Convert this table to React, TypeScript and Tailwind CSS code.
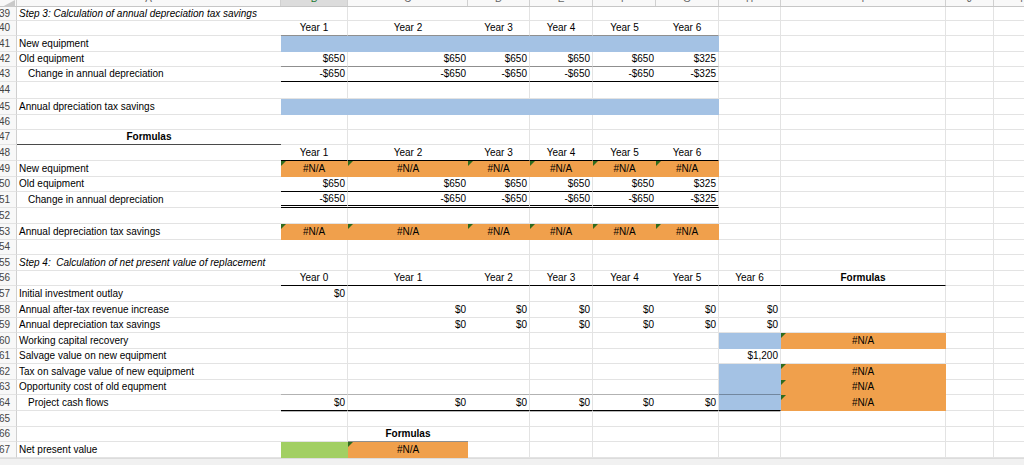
import React from "react";

type Cell = {
  t?: string;
  al?: "l" | "r" | "c";
  fill?: "blue" | "orange" | "green";
  b?: "grey" | "dark" | "black" | "soft" | "total" | "dbl";
  tri?: boolean;
  bold?: boolean;
  it?: boolean;
  ind?: boolean;
};

type Row = { n: number; h: number; c: Record<number, Cell> };

const COLS =
  "grid grid-cols-[17px_264px_67px_120px_62px_63px_63px_63px_62px_165px_48px_60px]";
const LETTERS = ["A", "B", "C", "D", "E", "F", "G", "H", "I", "J", "K"];
// body shows vertical gridlines only on some column edges
const VLINE = [false, true, false, true, true, false, true, true, true, true, true];

const HEIGHT: Record<number, string> = {
  14: "h-[14px]",
  15: "h-[15px]",
  16: "h-[16px]",
  17: "h-[17px]",
};

const FILL = {
  blue: "bg-[#a4c2e4]",
  orange: "bg-[#f0a04c]",
  green: "bg-[#a2cf63]",
};

const BORDER = {
  grey: "border-b border-b-[#8f8f8f]",
  dark: "border-b border-b-[#4a4a4a]",
  black: "border-b border-b-black",
  soft: "border-b border-b-black/30",
  total: "border-b border-b-black shadow-[0_1px_0_#b8b8b8]",
  dbl: "border-b-[3px] border-b-black [border-bottom-style:double]",
};

const span = (from: number, to: number, cell: Cell) => {
  const out: Record<number, Cell> = {};
  for (let i = from; i <= to; i++) out[i] = { ...cell };
  return out;
};

const list = (from: number, vals: string[], extra: Cell = {}) => {
  const out: Record<number, Cell> = {};
  vals.forEach((v, i) => (out[from + i] = { t: v, al: "r", ...extra }));
  return out;
};

const years = (from: number, start: number, count: number, b: Cell["b"]) => {
  const out: Record<number, Cell> = {};
  for (let i = 0; i < count; i++) out[from + i] = { t: `Year ${start + i}`, al: "c", b };
  return out;
};

const na = { t: "#N/A", al: "c" as const, fill: "orange" as const, tri: true };

const rows: Row[] = [
  { n: 39, h: 14, c: { 0: { t: "Step 3: Calculation of annual depreciation tax savings", it: true } } },
  { n: 40, h: 15, c: years(1, 1, 6, "grey") },
  { n: 41, h: 16, c: { 0: { t: "New equipment" }, ...span(1, 6, { fill: "blue" }) } },
  {
    n: 42,
    h: 15,
    c: { 0: { t: "Old equipment" }, ...list(1, ["$650", "$650", "$650", "$650", "$650", "$325"], { b: "grey" }) },
  },
  {
    n: 43,
    h: 15,
    c: {
      0: { t: "Change in annual depreciation", ind: true },
      ...list(1, ["-$650", "-$650", "-$650", "-$650", "-$650", "-$325"], { b: "black" }),
    },
  },
  { n: 44, h: 17, c: {} },
  { n: 45, h: 16, c: { 0: { t: "Annual dpreciation tax savings" }, ...span(1, 6, { fill: "blue" }) } },
  { n: 46, h: 15, c: {} },
  { n: 47, h: 15, c: { 0: { t: "Formulas", al: "c", bold: true, b: "dark" } } },
  { n: 48, h: 16, c: years(1, 1, 6, "black") },
  { n: 49, h: 16, c: { 0: { t: "New equipment" }, ...span(1, 6, na) } },
  {
    n: 50,
    h: 15,
    c: { 0: { t: "Old equipment" }, ...list(1, ["$650", "$650", "$650", "$650", "$650", "$325"], { b: "black" }) },
  },
  {
    n: 51,
    h: 16,
    c: {
      0: { t: "Change in annual depreciation", ind: true },
      ...list(1, ["-$650", "-$650", "-$650", "-$650", "-$650", "-$325"], { b: "dbl" }),
    },
  },
  { n: 52, h: 16, c: {} },
  { n: 53, h: 16, c: { 0: { t: "Annual depreciation tax savings" }, ...span(1, 6, na) } },
  { n: 54, h: 15, c: {} },
  { n: 55, h: 16, c: { 0: { t: "Step 4:  Calculation of net present value of replacement", it: true } } },
  { n: 56, h: 15, c: { ...years(1, 0, 7, "black"), 8: { t: "Formulas", al: "c", bold: true, b: "black" } } },
  { n: 57, h: 16, c: { 0: { t: "Initial investment outlay" }, 1: { t: "$0", al: "r" } } },
  {
    n: 58,
    h: 16,
    c: { 0: { t: "Annual after-tax revenue increase" }, ...list(2, ["$0", "$0", "$0", "$0", "$0", "$0"]) },
  },
  {
    n: 59,
    h: 15,
    c: { 0: { t: "Annual depreciation tax savings" }, ...list(2, ["$0", "$0", "$0", "$0", "$0", "$0"]) },
  },
  { n: 60, h: 16, c: { 0: { t: "Working capital recovery" }, 7: { fill: "blue" }, 8: na } },
  { n: 61, h: 15, c: { 0: { t: "Salvage value on new equipment" }, 7: { t: "$1,200", al: "r" } } },
  { n: 62, h: 16, c: { 0: { t: "Tax on salvage value of new equipment" }, 7: { fill: "blue" }, 8: na } },
  {
    n: 63,
    h: 15,
    c: {
      0: { t: "Opportunity cost of old equpment" },
      ...span(1, 6, { b: "soft" }),
      7: { fill: "blue", b: "soft" },
      8: na,
    },
  },
  {
    n: 64,
    h: 16,
    c: {
      0: { t: "Project cash flows", ind: true },
      ...list(1, ["$0", "$0", "$0", "$0", "$0", "$0"], { b: "total" }),
      7: { fill: "blue", b: "total" },
      8: na,
    },
  },
  { n: 65, h: 16, c: {} },
  { n: 66, h: 15, c: { 2: { t: "Formulas", al: "c", bold: true, b: "grey" } } },
  { n: 67, h: 16, c: { 0: { t: "Net present value" }, 1: { fill: "green" }, 2: na } },
];

function BodyCell({ cell, col }: { cell?: Cell; col: number }) {
  const c = cell ?? {};
  const align = c.al === "r" ? "justify-end" : c.al === "c" ? "justify-center" : "justify-start";
  const bottom = c.b ? BORDER[c.b] : c.fill ? "border-b border-b-transparent" : "border-b border-b-[#e3e3e3]";
  const right = VLINE[col]
    ? c.fill
      ? "border-r border-r-transparent"
      : "border-r border-r-[#e3e3e3]"
    : "";
  return (
    <div
      className={[
        "relative flex items-center overflow-hidden whitespace-pre leading-[12px]",
        c.ind ? "pl-[11px] pr-[2px]" : "px-[2px]",
        align,
        bottom,
        right,
        c.fill ? FILL[c.fill] : "",
        c.bold ? "font-bold" : "",
        c.it ? "italic" : "",
      ].join(" ")}
    >
      {c.tri && (
        <span className="absolute left-0 top-0 h-0 w-0 border-t-[5px] border-r-[5px] border-t-[#2f6b1e] border-r-transparent" />
      )}
      {c.t}
    </div>
  );
}

export default function App() {
  return (
    <div className="h-[465px] w-[1024px] overflow-hidden bg-white font-['Liberation_Sans',Arial,sans-serif] text-[10px] text-black">
      <div className={`${COLS} h-[7px] border-b border-b-[#c6c6c6] bg-[#f8f8f8]`}>
        <div className="relative border-r border-r-[#d0d0d0]">
          <svg className="absolute left-0 top-0" width="16" height="7" viewBox="0 0 16 7">
            <polygon points="2,7 15,7 15,0" fill="#c9c9c9" />
          </svg>
        </div>
        {LETTERS.map((l, i) => (
          <div
            key={l}
            className={`overflow-hidden border-r border-r-[#d0d0d0] text-center ${
              i === 1 ? "bg-[#dcdcdc] text-[#1e7a34]" : "text-[#666]"
            }`}
          >
            <span className="-mt-[7px] block leading-[12px]">{l}</span>
          </div>
        ))}
      </div>

      {rows.map((r) => (
        <div key={r.n} className={`${COLS} ${HEIGHT[r.h]}`}>
          <div className="flex items-center justify-end overflow-hidden border-b border-r border-b-[#e3e3e3] border-r-[#cfcfcf] bg-[#f8f8f8] pr-[6px] leading-[12px] text-[#444]">
            {r.n}
          </div>
          {LETTERS.map((_, i) => (
            <BodyCell key={i} col={i} cell={r.c[i]} />
          ))}
        </div>
      ))}

      <div className="h-[7px] border-t border-t-[#dcdcdc] bg-[#f1f1f1]" />
    </div>
  );
}
